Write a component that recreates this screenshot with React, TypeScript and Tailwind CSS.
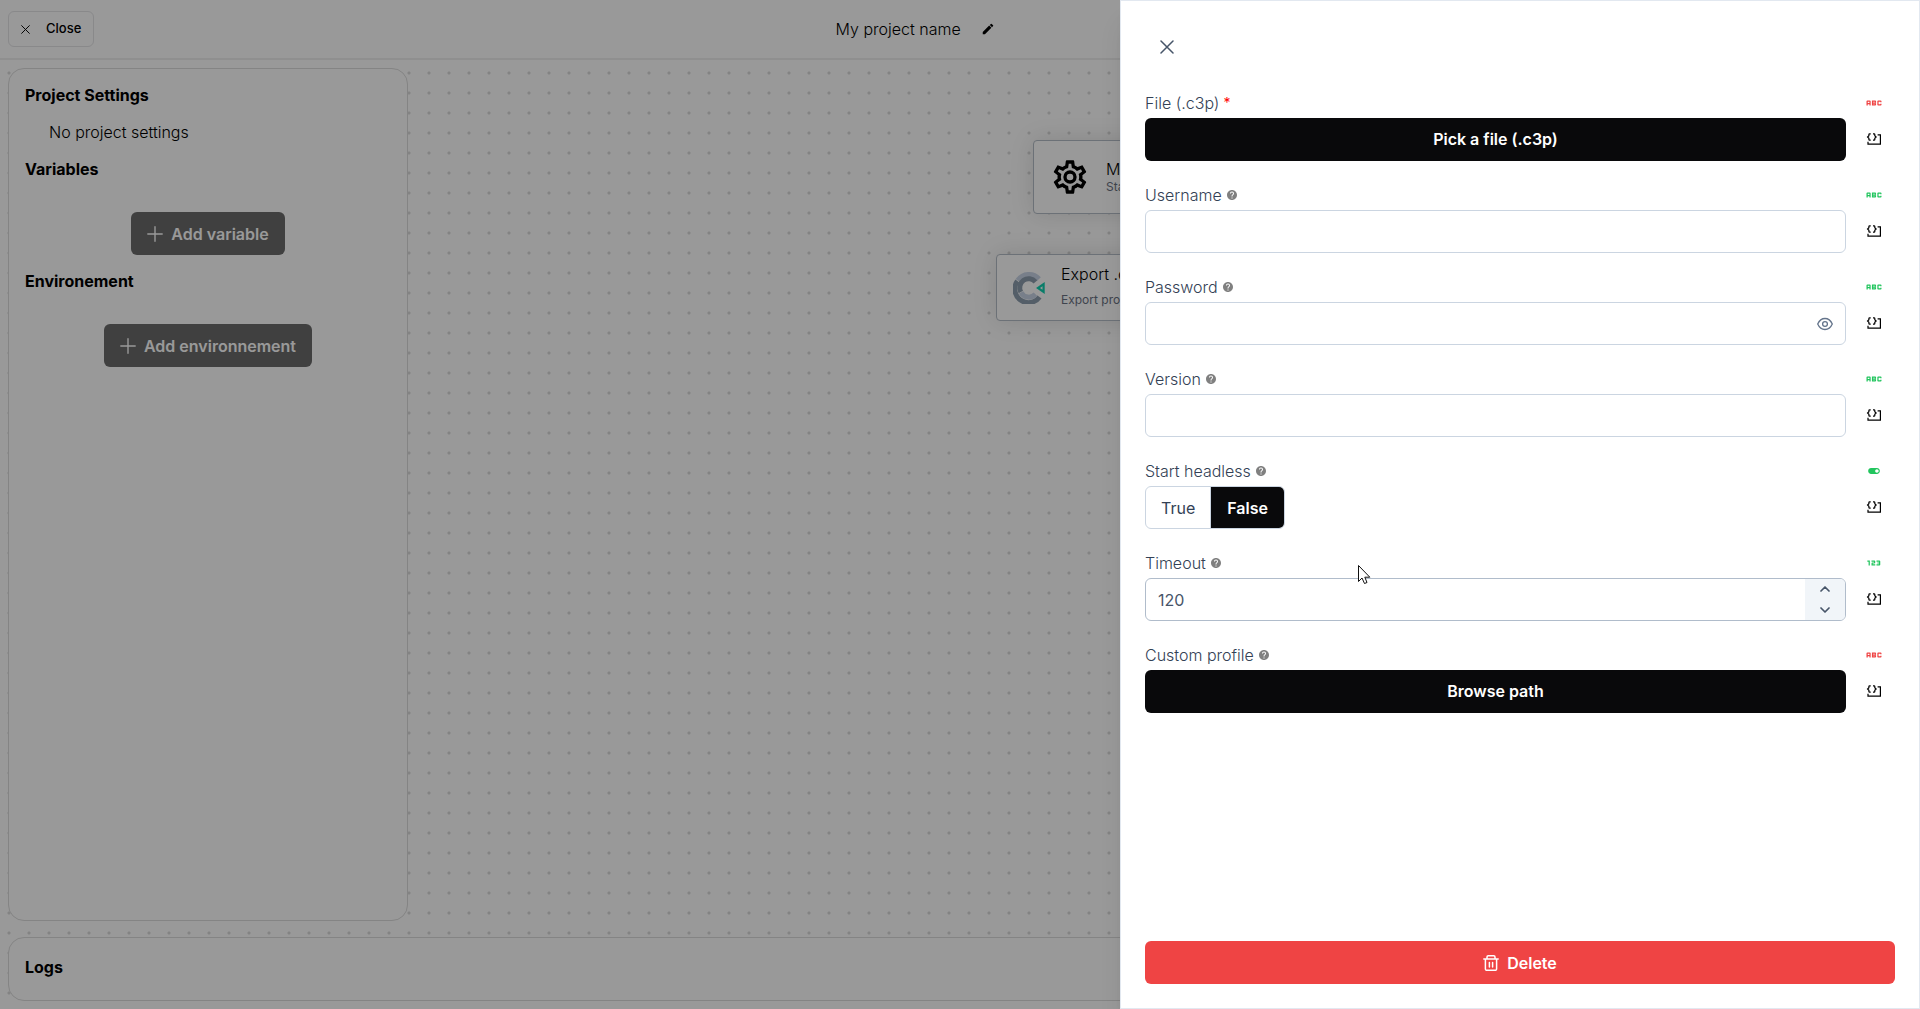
import React from "react";
import { MdAbc, Md123, MdModeEdit, MdHelp, MdToggleOn } from "react-icons/md";

const stroke = { fill: "none", stroke: "currentColor" } as const;

function Times({ size }: { size: number }) {
  return (
    <svg width={size} height={size} viewBox="0 0 14 14" strokeWidth="1.5" strokeLinecap="round" {...stroke}>
      <path d="M1 1L13 13M13 1L1 13" />
    </svg>
  );
}

function Plus() {
  return (
    <svg width="16" height="16" viewBox="0 0 16 16" strokeWidth="1.4" strokeLinecap="round" {...stroke}>
      <path d="M8 0.8V15.2M0.8 8H15.2" />
    </svg>
  );
}

function Trash() {
  return (
    <svg width="16" height="16" viewBox="0 0 16 16" strokeWidth="1.5" strokeLinecap="round" strokeLinejoin="round" {...stroke}>
      <path d="M0.8 4H15.2M2.4 4V14Q2.4 15.3 3.7 15.3H12.3Q13.6 15.3 13.6 14V4M4 4V2Q4 0.8 5.2 0.8H10.8Q12 0.8 12 2V4M6.4 7.4V12M9.6 7.4V12" />
    </svg>
  );
}

function Eye() {
  return (
    <svg width="16" height="16" viewBox="0 0 16 16" strokeWidth="1.3" {...stroke}>
      <path d="M0.7 8C2.4 4.2 5 2.5 8 2.5S13.6 4.2 15.3 8C13.6 11.8 11 13.5 8 13.5S2.4 11.8 0.7 8Z" />
      <circle cx="8" cy="8" r="2.4" />
    </svg>
  );
}

function Chevron({ down }: { down?: boolean }) {
  return (
    <svg width="10" height="6" viewBox="0 0 10 6" strokeWidth="1.7" strokeLinecap="round" strokeLinejoin="round" {...stroke}>
      <path d={down ? "M1 1L5 5L9 1" : "M1 5L5 1L9 5"} />
    </svg>
  );
}

function CodeBox() {
  return (
    <svg width="16" height="16" viewBox="0 0 16 16" strokeWidth="1.2" {...stroke}>
      <path d="M11.6 3.9H14.4V13.2H2V10.8" />
      <path d="M4.7 2.8H3.7Q2.9 2.8 2.9 3.6V4.8L1.6 6L2.9 7.2V8.4Q2.9 9.2 3.7 9.2H4.7M7 2.8H8Q8.8 2.8 8.8 3.6V4.8L10.1 6L8.8 7.2V8.4Q8.8 9.2 8 9.2H7" />
    </svg>
  );
}

function Gear() {
  return (
    <svg width="40" height="40" viewBox="0 0 24 24" fill="currentColor">
      <path d="M12 8a4 4 0 0 1 4 4 4 4 0 0 1-4 4 4 4 0 0 1-4-4 4 4 0 0 1 4-4m0 2a2 2 0 0 0-2 2 2 2 0 0 0 2 2 2 2 0 0 0 2-2 2 2 0 0 0-2-2m-2 12c-.25 0-.46-.18-.5-.42l-.37-2.65c-.63-.25-1.17-.59-1.69-.99l-2.49 1.01c-.22.08-.49 0-.61-.22l-2-3.46a.493.493 0 0 1 .12-.64l2.11-1.66L4.5 12l.07-1-2.11-1.63a.493.493 0 0 1-.12-.64l2-3.46c.12-.22.39-.31.61-.22l2.49 1c.52-.39 1.06-.73 1.69-.98l.37-2.65c.04-.24.25-.42.5-.42h4c.25 0 .46.18.5.42l.37 2.65c.63.25 1.17.59 1.69.98l2.49-1c.22-.09.49 0 .61.22l2 3.46c.13.22.07.49-.12.64L19.43 11l.07 1-.07 1 2.11 1.63c.19.15.25.42.12.64l-2 3.46c-.12.22-.39.31-.61.22l-2.49-1c-.52.39-1.06.73-1.69.98l-.37 2.65c-.04.24-.25.42-.5.42zm1.25-18-.37 2.61c-1.2.25-2.26.89-3.03 1.78L5.44 7.35l-.75 1.3L6.8 10.2a5.55 5.55 0 0 0 0 3.6l-2.12 1.56.75 1.3 2.43-1.04c.77.88 1.82 1.52 3.01 1.76l.37 2.62h1.52l.37-2.61c1.19-.25 2.24-.89 3.01-1.77l2.43 1.04.75-1.3-2.12-1.55c.4-1.17.4-2.44 0-3.61l2.11-1.55-.75-1.3-2.41 1.04a5.42 5.42 0 0 0-3.03-1.77L12.75 4z" />
    </svg>
  );
}

function ConstructLogo() {
  return (
    <svg width="32" height="32" viewBox="0 0 32 32" fill="none">
      {/* light outer arc over the top, dark outer arc down the left and along the bottom */}
      <path d="M4.8 8.5A13.5 13.5 0 0 1 26 7" stroke="#c8d4e6" strokeWidth="5" />
      <path d="M4.4 9A13.5 13.5 0 0 0 26.5 25" stroke="#8c9dad" strokeWidth="5" />
      {/* inner ring with the shades swapped */}
      <path d="M7.8 20A9 9 0 0 1 22.5 9.8" stroke="#8c9dad" strokeWidth="5" />
      <path d="M8 20.5A9 9 0 0 0 22.5 22.2" stroke="#c8d4e6" strokeWidth="5" />
      <path d="M30.6 12.2V19.8L25 16Z" stroke="#10d0b0" strokeWidth="2.2" />
    </svg>
  );
}

type Kind = "abc" | "toggle" | "123";

function Field({ label, id, help, required, kind, red, children }: {
  label: string; id: string; help?: boolean; required?: boolean; kind: Kind; red?: boolean; children: React.ReactNode;
}) {
  return (
    <div className="flex gap-4">
      <div className="flex min-w-0 flex-1 flex-col gap-0.5">
        <div className="flex h-[26px] items-center gap-1">
          <label htmlFor={id}>{label}</label>
          {required && <span className="text-sm font-normal text-[#ff0000]">*</span>}
          {help && <MdHelp size={12} className="text-[#808080]" />}
        </div>
        {children}
      </div>
      <div className="flex w-[33px] flex-col items-center gap-0.5 pr-2.5">
        <div className={red ? "flex h-[26px] items-center text-[#ef4444]" : "flex h-[26px] items-center text-[#22c55e]"}>
          {kind === "abc" && <MdAbc size={20} />}
          {kind === "123" && <Md123 size={20} />}
          {kind === "toggle" && <MdToggleOn size={14} />}
        </div>
        <button aria-label={"Edit " + label + " as code"} className="flex h-[41px] items-center text-black">
          <CodeBox />
        </button>
      </div>
    </div>
  );
}

const box = "h-[43px] w-full rounded-md border border-[#cbd5e1] bg-white px-3 outline-none";
const dark = "h-[43px] w-full rounded-md bg-[#09090b] pb-0.5 font-semibold text-white";
const add = "flex h-[43px] items-center gap-2 rounded-md bg-[#6b6b6b] px-4 font-semibold text-white";

export default function App() {
  return (
    <div className="relative flex h-screen flex-col overflow-hidden bg-white font-['Inter',sans-serif] text-base font-light text-black">
      <header className="flex h-[60px] shrink-0 items-center justify-between border-b-2 border-[#eeeeee] px-2">
        <button className="flex h-9 items-center gap-4 rounded-md border border-zinc-200 px-3 text-[13px] font-medium">
          <Times size={9} />
          Close
        </button>
        <div className="flex items-center gap-5">
          <span>My project name</span>
          <button aria-label="Rename project"><MdModeEdit size={14} /></button>
        </div>
        <div className="w-44" />
      </header>

      <main className="relative flex min-h-0 flex-1 flex-col gap-4 bg-[radial-gradient(circle,#dadada_1px,transparent_2px)] bg-[length:20px_20px] bg-[position:-1px_3px] p-2">
        <aside className="flex w-[400px] flex-1 flex-col rounded-2xl border border-[#dcdcdc] bg-white px-4 py-3.5">
          <h2 className="font-bold">Project Settings</h2>
          <p className="px-6 py-[13px]">No project settings</p>
          <h2 className="font-bold">Variables</h2>
          <div className="flex justify-center pt-[31px] pb-3.5">
            <button className={add}><Plus />Add variable</button>
          </div>
          <h2 className="font-bold">Environement</h2>
          <div className="flex justify-center pt-[31px]">
            <button className={add}><Plus />Add environnement</button>
          </div>
        </aside>
        <section className="flex h-16 shrink-0 items-center rounded-2xl border border-[#dcdcdc] bg-white px-4 pb-1">
          <h2 className="font-bold">Logs</h2>
        </section>

        <div className="absolute top-20 left-[1033px] flex h-[74px] w-72 items-center gap-4 rounded border border-[#b4bcc6] bg-white px-4 shadow-[0_0_24px_rgba(0,0,0,0.12)]">
          <Gear />
          <div>
            <div className="leading-5">Main</div>
            <div className="text-xs font-normal text-gray-500">Start</div>
          </div>
        </div>
        <div className="absolute top-[194px] left-[996px] flex h-[67px] w-80 items-center gap-4 rounded border border-[#b4bcc6] bg-white px-4 shadow-[0_0_24px_rgba(0,0,0,0.12)]">
          <ConstructLogo />
          <div className="flex flex-col gap-1 pb-1">
            <div>Export .c3p</div>
            <div className="text-xs leading-5 font-normal text-gray-500">Export project</div>
          </div>
        </div>
      </main>

      <div className="absolute inset-0 flex justify-end bg-black/40">
        <div role="dialog" aria-label="Node settings" className="flex w-[800px] flex-col border border-[#e2e8f0] bg-white px-6 pb-6 text-[#334155] shadow-xl">
          <div className="flex h-[89px] shrink-0 items-center px-[15px] pt-0.5">
            <button aria-label="Close panel" className="text-[#475569]"><Times size={14} /></button>
          </div>
          <form className="flex flex-1 flex-col gap-[21px]" onSubmit={(e) => e.preventDefault()}>
            <Field label="File (.c3p)" id="file" required kind="abc" red>
              <button id="file" className={dark}>Pick a file (.c3p)</button>
            </Field>
            <Field label="Username" id="username" help kind="abc">
              <input id="username" type="text" className={box} />
            </Field>
            <Field label="Password" id="password" help kind="abc">
              <div className="flex h-[43px] items-center rounded-md border border-[#cbd5e1] pr-3">
                <input id="password" type="password" className="h-full min-w-0 flex-1 bg-transparent px-3 outline-none" />
                <button aria-label="Show password" className="text-[#64748b]"><Eye /></button>
              </div>
            </Field>
            <Field label="Version" id="version" help kind="abc">
              <input id="version" type="text" className={box} />
            </Field>
            <Field label="Start headless" id="headless" help kind="toggle">
              <div id="headless" role="group" aria-label="Start headless" className="flex h-[43px] self-start overflow-hidden rounded-md border border-[#cbd5e1]">
                <button aria-pressed="false" className="px-[15px] font-normal">True</button>
                <button aria-pressed="true" className="border-l border-[#cbd5e1] bg-[#09090b] px-4 font-semibold text-white">False</button>
              </div>
            </Field>
            <Field label="Timeout" id="timeout" help kind="123">
              <div className="flex h-[43px] overflow-hidden rounded-md border border-[#b0bccb]">
                <input id="timeout" type="text" inputMode="numeric" defaultValue="120" className="min-w-0 flex-1 px-3 font-normal text-[#475569] outline-none" />
                <div className="flex w-10 flex-col bg-[#f1f5f9] text-[#475569]">
                  <button aria-label="Increase" className="flex flex-1 items-center justify-center"><Chevron /></button>
                  <button aria-label="Decrease" className="flex flex-1 items-center justify-center"><Chevron down /></button>
                </div>
              </div>
            </Field>
            <Field label="Custom profile" id="profile" help kind="abc" red>
              <button id="profile" className={dark}>Browse path</button>
            </Field>
          </form>
          <button className="flex h-[43px] shrink-0 items-center justify-center gap-2 rounded-md bg-[#ef4444] font-semibold text-white">
            <Trash />Delete
          </button>
        </div>
      </div>

      <svg className="absolute top-[564px] left-[1357px]" width="14" height="22" viewBox="0 0 14 22" fill="white" stroke="#111111">
        <path d="M1.5 1.5V17.5L5 14L7.5 19.5L10 18.5L7.8 13.2H12.8Z" />
      </svg>
    </div>
  );
}
